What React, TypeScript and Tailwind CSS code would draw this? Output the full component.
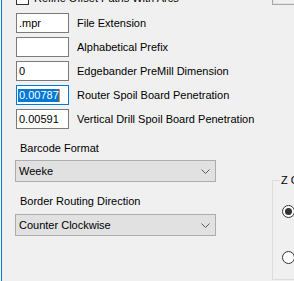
import { useState } from 'react';

type FieldRow = {
    value: string;
    label: string;
    focused?: boolean;
};

const fields: FieldRow[] = [
    { value: '.mpr', label: 'File Extension' },
    { value: '', label: 'Alphabetical Prefix' },
    { value: '0', label: 'Edgebander PreMill Dimension' },
    { value: '0.00787', label: 'Router Spoil Board Penetration', focused: true },
    { value: '0.00591', label: 'Vertical Drill Spoil Board Penetration' },
];

function Chevron() {
    return (
        <svg width="9" height="5" viewBox="0 0 9 5" className="shrink-0">
            <polyline points="0.5,0.5 4.5,4.5 8.5,0.5" fill="none" stroke="#5a5a5a" strokeWidth="1" />
        </svg>
    );
}

function Combo({ value }: { value: string }) {
    return (
        <div className="flex h-[22px] w-[201px] items-center justify-between border border-[#adadad] bg-[#e1e1e1] pl-[3px] pr-[5px]">
            <span>{value}</span>
            <Chevron />
        </div>
    );
}

function Radio({ checked }: { checked?: boolean }) {
    return (
        <div className="flex h-[13px] w-[13px] shrink-0 items-center justify-center rounded-full border border-[#333333] bg-white">
            {checked && <div className="h-[7px] w-[7px] rounded-full bg-[#333333]" />}
        </div>
    );
}

export default function App() {
    const [refine] = useState(false);

    return (
        <div
            className="flex h-[281px] w-[294px] overflow-hidden bg-[#f0f0f0] text-[11px] leading-[13px] text-black"
            style={{ fontFamily: '"Liberation Sans", Arial, sans-serif' }}
        >
            {/* Left edge */}
            <div className="w-px shrink-0 bg-[#f7f7f7]" />
            <div className="w-px shrink-0 bg-[#0078d7]" />

            {/* Main column */}
            <div className="flex w-[270px] shrink-0 flex-col pl-[14px]">
                <div className="-mt-[8px] flex h-[13px] items-center gap-[5px]">
                    <div className="h-[13px] w-[13px] shrink-0 border border-[#333333] bg-white">
                        {refine && <span>✓</span>}
                    </div>
                    <span className="whitespace-nowrap">Refine Offset Paths With Arcs</span>
                </div>

                <div className="mt-[8px] flex flex-col gap-[4px]">
                    {fields.map((f) => (
                        <div key={f.label} className="flex items-center gap-[8px]">
                            <div
                                className={
                                    f.focused
                                        ? 'flex h-[20px] w-[53px] shrink-0 items-center border border-[#0078d7] bg-white pl-px'
                                        : 'flex h-[20px] w-[53px] shrink-0 items-center border border-[#7a7a7a] bg-white pl-[2px]'
                                }
                            >
                                {f.focused ? (
                                    <>
                                        <span className="bg-[#0078d7] pl-px text-white">{f.value}</span>
                                        <span className="h-[13px] w-px bg-[#ff8a1c]" />
                                    </>
                                ) : (
                                    <span>{f.value}</span>
                                )}
                            </div>
                            <span className="whitespace-nowrap">{f.label}</span>
                        </div>
                    ))}
                </div>

                <div className="mt-[13px] pl-[4px]">Barcode Format</div>
                <div className="mt-[5px] -ml-px">
                    <Combo value="Weeke" />
                </div>

                <div className="mt-[13px] pl-[4px]">Border Routing Direction</div>
                <div className="mt-[6px] -ml-px">
                    <Combo value="Counter Clockwise" />
                </div>
            </div>

            {/* Right column */}
            <div className="flex w-[150px] shrink-0 flex-col">
                <div className="-mt-[15px] h-[20px] border border-[#a9a9a9] bg-[#f0f0f0]">
                    <div className="h-full border border-[#e3e3e3]" />
                </div>

                <div className="relative mt-[175px] h-[100px] border border-[#dcdcdc] pl-[9px] pt-[24px]">
                    <span className="absolute -top-[7px] left-[7px] bg-[#f0f0f0] px-px whitespace-nowrap">Z Clearance</span>
                    <div className="flex flex-col gap-[33px]">
                        <div className="flex items-center gap-[4px]">
                            <Radio checked />
                            <span className="whitespace-nowrap">Absolute</span>
                        </div>
                        <div className="flex items-center gap-[4px]">
                            <Radio />
                            <span className="whitespace-nowrap">Relative</span>
                        </div>
                    </div>
                </div>
            </div>
        </div>
    );
}
